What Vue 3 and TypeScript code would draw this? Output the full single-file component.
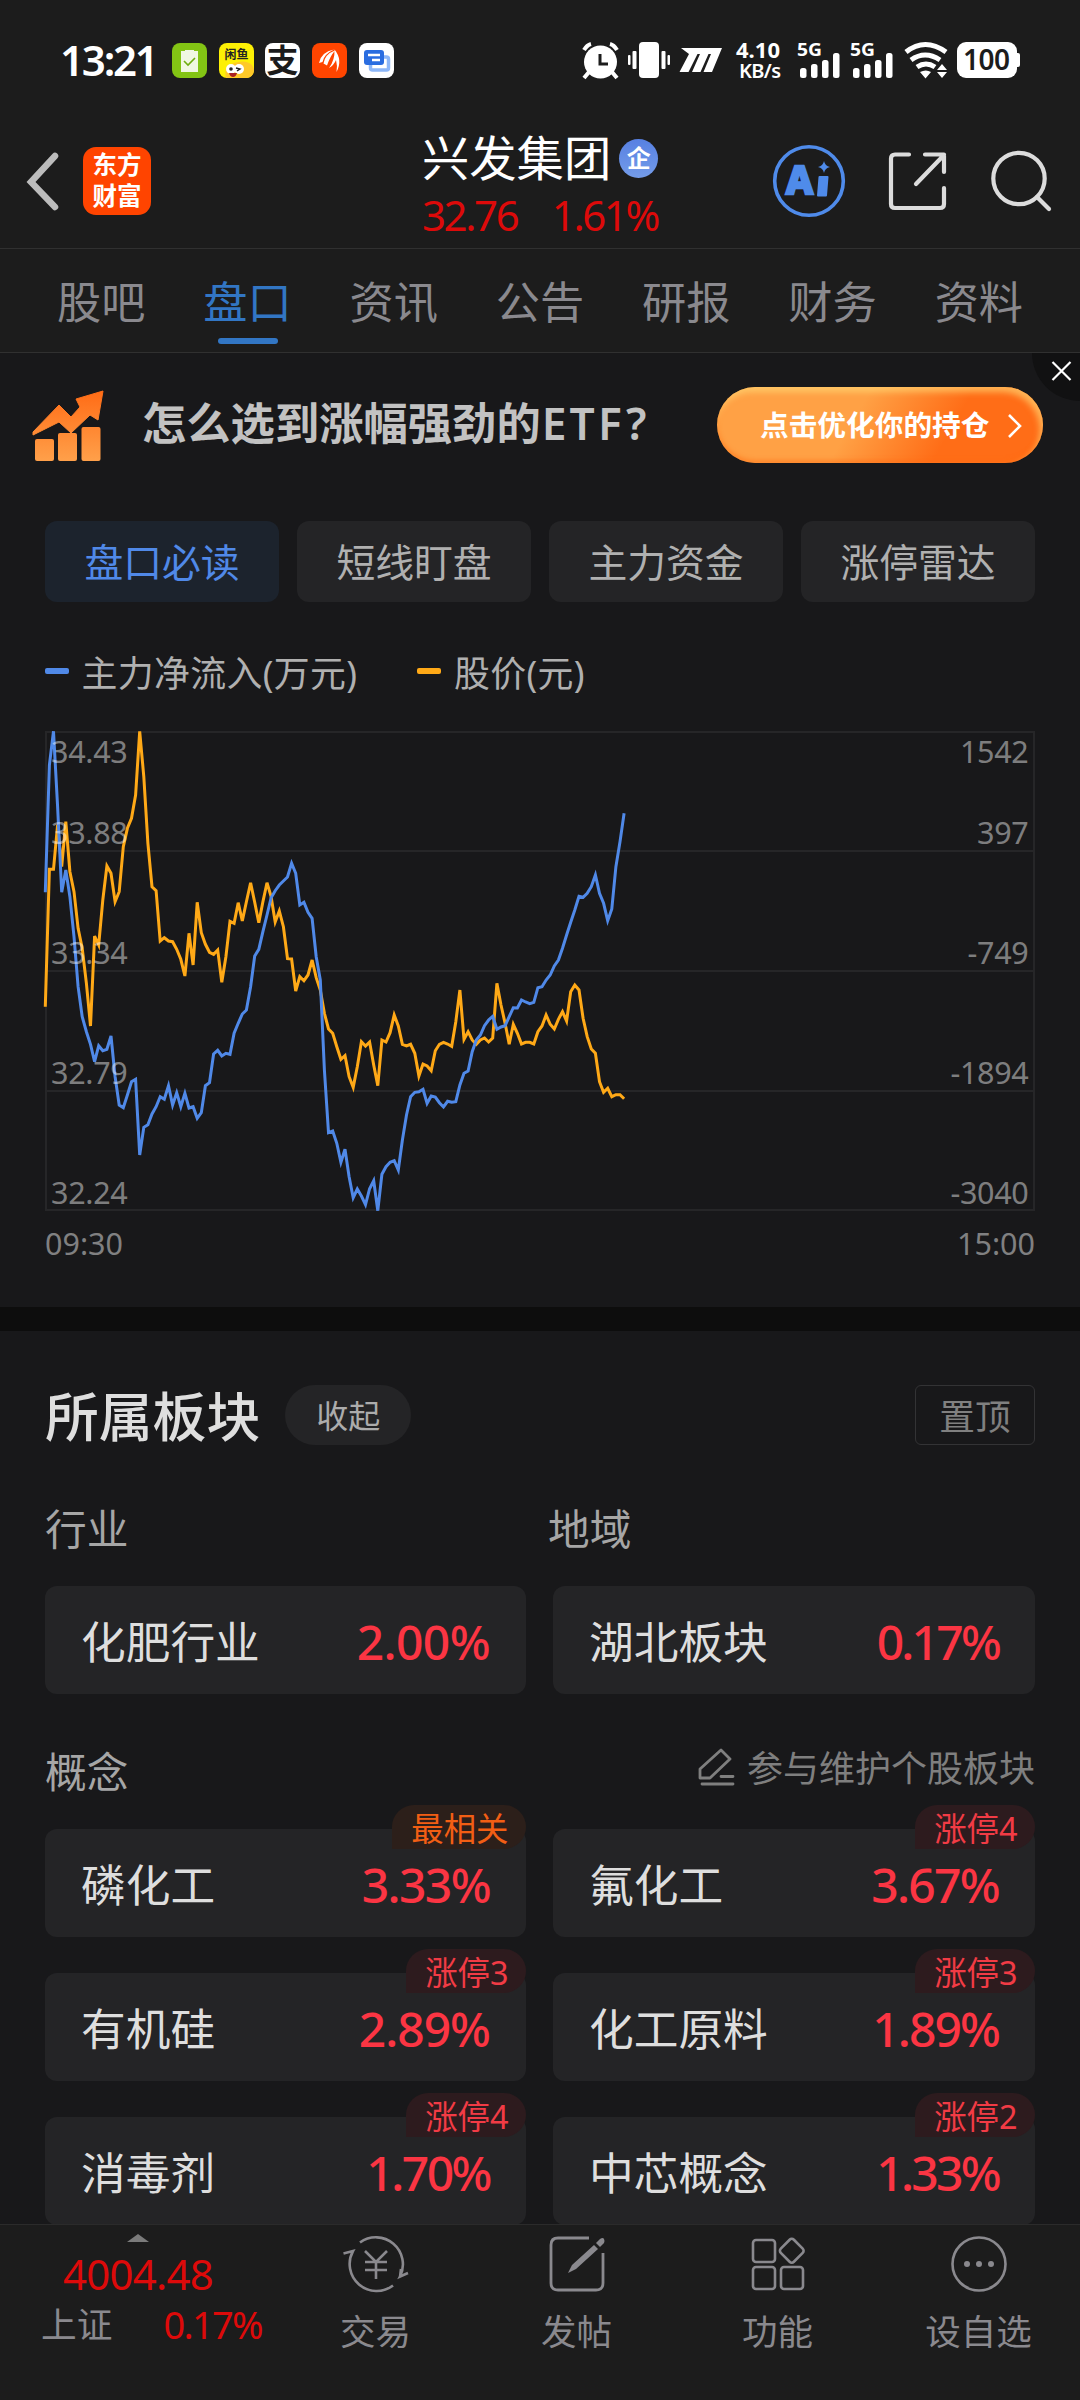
<script setup lang="ts">
interface Board { name: string; change: string; track: number; tag?: string; hot?: boolean }

const tabs: string[] = ['股吧', '盘口', '资讯', '公告', '研报', '财务', '资料']
const subTabs: string[] = ['盘口必读', '短线盯盘', '主力资金', '涨停雷达']

// track: letter spacing of the percentage, in px
const regions: Board[] = [
  { name: '化肥行业', change: '2.00%', track: -0.6 },
  { name: '湖北板块', change: '0.17%', track: -2.8 },
]
const concepts: Board[] = [
  { name: '磷化工', change: '3.33%', track: -1.6, tag: '最相关', hot: true },
  { name: '氟化工', change: '3.67%', track: -1.7, tag: '涨停4' },
  { name: '有机硅', change: '2.89%', track: -1, tag: '涨停3' },
  { name: '化工原料', change: '1.89%', track: -1.9, tag: '涨停3' },
  { name: '消毒剂', change: '1.70%', track: -2.5, tag: '涨停4' },
  { name: '中芯概念', change: '1.33%', track: -2.7, tag: '涨停2' },
]

// One sample per trading minute, in thirds of a pixel from the chart's top
const price: number[] = [
  890, 478, 478, 345, 470, 335, 485, 545, 655, 715, 820, 948, 678, 705, 570, 468, 490, 575, 545, 410,
  355, 325, 255, 64, 200, 400, 530, 542, 693, 683, 693, 695, 718, 748, 798, 670, 765, 577, 668, 703,
  727, 733, 720, 817, 740, 634, 640, 578, 633, 575, 518, 577, 638, 575, 518, 560, 636, 603, 650, 746,
  747, 843, 800, 812, 795, 750, 803, 840, 910, 957, 970, 1010, 1048, 1037, 1100, 1132, 1070, 995, 1008, 996,
  1065, 1127, 990, 996, 968, 915, 948, 1003, 1008, 1003, 1030, 1098, 1062, 1068, 1082, 1022, 1003, 997, 1002, 1009,
  935, 840, 988, 965, 990, 1003, 990, 984, 996, 984, 820, 885, 940, 1003, 943, 970, 1002, 997, 997, 1002,
  965, 948, 915, 943, 957, 928, 905, 933, 845, 825, 840, 925, 980, 1017, 1030, 1115, 1147, 1135, 1160, 1154,
  1154, 1166,
]
const inflow: number[] = [
  547, 165, 64, 290, 547, 480, 560, 680, 830, 920, 965, 1003, 1055, 1007, 1022, 1018, 978, 1100, 1185, 1193,
  1155, 1115, 1108, 1335, 1252, 1244, 1212, 1190, 1160, 1168, 1127, 1185, 1148, 1190, 1150, 1194, 1190, 1225, 1208, 1127,
  1118, 1032, 1021, 1038, 1030, 1033, 970, 940, 912, 900, 830, 738, 718, 665, 615, 563, 542, 525, 513, 501,
  460, 490, 585, 577, 607, 625, 740, 810, 1080, 1268, 1263, 1300, 1357, 1318, 1400, 1463, 1437, 1458, 1484, 1436,
  1412, 1502, 1393, 1370, 1357, 1352, 1380, 1290, 1215, 1160, 1147, 1145, 1138, 1180, 1158, 1161, 1178, 1191, 1174, 1177,
  1175, 1125, 1090, 1083, 1025, 990, 975, 947, 930, 919, 958, 951, 947, 920, 893, 894, 870, 876, 881, 877,
  833, 830, 810, 795, 768, 750, 715, 675, 637, 600, 559, 562, 550, 530, 495, 550, 580, 632, 597, 470,
  395, 310,
]
const line = (values: number[]): string =>
  values.map((v, i) => `${(0.3 + i * 4.105).toFixed(1)},${(v / 3 - 20).toFixed(1)}`).join(' ')

const axis = [
  { y: 33, left: '34.43', right: '1542' },
  { y: 114, left: '33.88', right: '397' },
  { y: 234, left: '33.34', right: '-749' },
  { y: 354, left: '32.79', right: '-1894' },
  { y: 474, left: '32.24', right: '-3040' },
]
</script>

<template>
  <div class="screen">
    <header class="top">
      <div class="status">
        <span class="clock">13:21</span>
        <div class="apps">
          <svg viewBox="0 0 35 35"><rect width="35" height="35" rx="8" fill="#83c414" /><path d="M9 8h4V7h9v1h4v21H9z" fill="#f0f7e2" /><path d="M12 18l4 4 7-7" fill="none" stroke="#6fae10" stroke-width="1.6" /></svg>
          <svg viewBox="0 0 35 35">
            <rect width="35" height="35" rx="8" fill="#fdf005" />
            <path d="M7 35q-3-12 8-15 12-4 18 2l2 4v2q-1 6-7 7z" fill="#ffc928" />
            <circle cx="12" cy="26" r="5" fill="#fff" /><circle cx="20" cy="26" r="5" fill="#fff" /><circle cx="12" cy="26" r="1.8" fill="#222" /><path d="M17 25l4 1-3 2" fill="none" stroke="#222" stroke-width="1.4" /><path d="M10 30h8q-1 4-4 4t-4-4z" fill="#a22" />
            <text x="17.5" y="15.5" text-anchor="middle" font-size="12" font-weight="700" fill="#222">闲鱼</text>
          </svg>
          <svg viewBox="0 0 35 35"><rect width="35" height="35" rx="8" fill="#fff" /><text x="17.5" y="29" text-anchor="middle" font-size="32" font-weight="700" fill="#1b1b1b">支</text></svg>
          <svg viewBox="0 0 35 35"><rect width="35" height="35" rx="8" fill="#ff4500" /><path d="M7 20q2-11 15-13.500Q12 11 10.500 19zM11.500 20.500Q13 11 23 7.500q-5 6-8 15zM17 25q6-8 5.500-18.500Q31 17 24.500 29q1-7-.5-12-2 5-7 8z" fill="#fff" /></svg>
          <svg viewBox="0 0 35 35"><rect width="35" height="35" rx="8" fill="#fff" /><rect x="11.500" y="14" width="18" height="13" rx="2" fill="none" stroke="#8db7f8" stroke-width="3.500" /><rect x="5" y="7" width="20" height="15" rx="3" fill="#2a6de0" /><path d="M9 12h12M13 17h8" stroke="#fff" stroke-width="2.500" /></svg>
        </div>
        <svg class="indicators" width="440" height="60" viewBox="581 30 440 60">
          <g fill="#fff">
            <circle cx="600.500" cy="62" r="16.500" />
            <path d="M589 72l-5 6M612 72l5 6M584 50q3-5 7-6M617 50q-3-5-7-6" stroke="#fff" stroke-width="4" />
            <path d="M600 54v10h8" stroke="#1c1c1c" stroke-width="3" fill="none" />
            <rect x="639" y="42" width="20" height="36" rx="4" />
            <rect x="632.500" y="51" width="4" height="18" rx="1" /><rect x="628" y="55" width="2.500" height="10" rx="1" />
            <rect x="661.500" y="51" width="4" height="18" rx="1" /><rect x="667.500" y="55" width="2.500" height="10" rx="1" />
            <path d="M681 48h41l-10 24h-8.500l7.500-18h-2.500l-8 18h-8.500l8-18h-2.500l-9 18h-9l9.500-18z" />
            <text x="758" y="58" text-anchor="middle" font-size="22" font-weight="700" textLength="44">4.10</text>
            <text x="760" y="78" text-anchor="middle" font-size="20" font-weight="600" textLength="42">KB/s</text>
            <g v-for="x in [797, 850]" :key="x">
              <text :x="x" y="56" font-size="18.500" font-weight="700" textLength="25" lengthAdjust="spacingAndGlyphs">5G</text>
              <rect :x="x + 3" y="68" width="6.500" height="10" rx="2.500" />
              <rect :x="x + 14" y="64" width="6.500" height="14" rx="2.500" />
              <rect :x="x + 25" y="60" width="6.500" height="18" rx="2.500" />
              <rect :x="x + 36" y="53" width="6.500" height="25" rx="2.500" />
            </g>
            <path d="M906 52q19-15 40 0M911 60q14-10 29 0M917 67q9-6 18 0" fill="none" stroke="#fff" stroke-width="5" />
            <path d="M920 72q6-3 11 0l-5.500 6.500zM937 70l5-6 5 6zM937 72l5 6 5-6z" />
            <rect x="957" y="42" width="60" height="36" rx="9" /><rect x="1014" y="53" width="6" height="14" rx="2" />
            <text x="986.500" y="70" text-anchor="middle" font-size="28" font-weight="600" fill="#1c1c1c" textLength="47">100</text>
          </g>
        </svg>
      </div>

      <div class="nav">
        <svg class="back" width="36" height="60" viewBox="0 0 36 60"><path d="M30 5L6 31l24 25" fill="none" stroke="#bcbcbc" stroke-width="6.500" stroke-linecap="round" /></svg>
        <div class="logo"><span>东方</span><span>财富</span></div>
        <div class="title">
          <div class="name"><span>兴发集团</span><i>企</i></div>
          <div class="quote"><span>32.76</span><span>1.61%</span></div>
        </div>
        <svg class="ai" width="74" height="74" viewBox="0 0 74 74">
          <circle cx="37" cy="37" r="34.300" fill="none" stroke="#4f8bea" stroke-width="3.600" />
          <text x="14" y="50" font-size="40" font-weight="800" fill="#4f8bea" stroke="#4f8bea" stroke-width="2.500" textLength="27" lengthAdjust="spacingAndGlyphs">A</text>
          <path d="M47.500 33h8l-1.500 18.500h-8z" fill="#4f8bea" stroke="#4f8bea" stroke-width="2" stroke-linejoin="round" />
          <path d="M52 17q1 5 6 6-5 1-6 6-1-5-6-6 5-1 6-6z" fill="#4f8bea" />
        </svg>
        <svg class="share" width="62" height="62" viewBox="0 0 62 62" fill="none" stroke="#dcdcdc" stroke-width="4.200" stroke-linecap="round" stroke-linejoin="round">
          <path d="M22 4.500H8q-4 0-4 4V54q0 4 4 4h45q4 0 4-4V38M38 4.500h19V22M57 5L29 34" />
        </svg>
        <svg class="search" width="62" height="64" viewBox="0 0 62 64" fill="none" stroke="#dcdcdc" stroke-width="4.200" stroke-linecap="round"><circle cx="29" cy="29.500" r="25.700" /><path d="M47 48l12 12" /></svg>
      </div>
    </header>

    <nav class="tabs">
      <div v-for="(t, i) in tabs" :key="t" class="tab" :class="{ on: i === 1 }">{{ t }}</div>
    </nav>

    <section class="banner">
      <svg width="74" height="72" viewBox="0 0 74 72">
        <defs><linearGradient id="rise" x1="0" y1="0" x2="0" y2="72" gradientUnits="userSpaceOnUse"><stop offset="0" stop-color="#ff6a14" /><stop offset="1" stop-color="#ffa04a" /></linearGradient></defs>
        <path d="M2 43L28 16l12 12 9-10-4-8L72 2l-5 29-8-5-19 18-12-11L2 46z" fill="url(#rise)" stroke="url(#rise)" stroke-linejoin="round" />
        <g fill="url(#rise)"><rect x="4" y="50" width="19" height="22" rx="2" /><rect x="27" y="44" width="19" height="28" rx="2" /><rect x="50.500" y="38" width="19" height="34" rx="2" /></g>
      </svg>
      <strong>怎么选到涨幅强劲的<b>ETF?</b></strong>
      <div class="cta">
        <span>点击优化你的持仓</span>
        <svg width="16" height="26" viewBox="0 0 16 26"><path d="M2 2l11 11L2 24" fill="none" stroke="#fff" stroke-width="2.600" /></svg>
      </div>
      <svg class="close" width="48" height="48" viewBox="0 0 48 48"><circle cx="48" cy="0" r="48" fill="#111112" /><path d="M20.500 9l18 18M38.500 9l-18 18" stroke="#fff" stroke-width="2.200" /></svg>
    </section>

    <section class="market">
      <div class="subtabs">
        <div v-for="(t, i) in subTabs" :key="t" :class="{ on: i === 0 }">{{ t }}</div>
      </div>
      <div class="legend">
        <span><b class="blue"></b>主力净流入(万元)</span>
        <span><b class="amber"></b>股价(元)</span>
      </div>
      <svg class="chart" width="990" height="484" viewBox="0 0 990 484">
        <path d="M0 2H990M0 121H990M0 241H990M0 361H990M0 480H990M1 1V481M989 1V481" stroke="#262628" stroke-width="2" />
        <polyline :points="line(price)" fill="none" stroke="#ffa917" stroke-width="3" />
        <polyline :points="line(inflow)" fill="none" stroke="#5089e8" stroke-width="3" />
        <g font-size="30.500" letter-spacing="-.3" fill="rgba(255,255,255,.46)">
          <template v-for="a in axis" :key="a.y">
            <text x="6" :y="a.y">{{ a.left }}</text>
            <text x="983.500" :y="a.y" text-anchor="end">{{ a.right }}</text>
          </template>
        </g>
      </svg>
      <div class="times"><span>09:30</span><span>15:00</span></div>
    </section>

    <section class="boards">
      <div class="head">
        <h2>所属板块</h2>
        <span class="fold">收起</span>
        <span class="pin">置顶</span>
      </div>
      <div class="pair labels"><span>行业</span><span>地域</span></div>
      <div class="pair">
        <div v-for="r in regions" :key="r.name" class="card">
          <span>{{ r.name }}</span><em :style="{ letterSpacing: r.track + 'px' }">{{ r.change }}</em>
        </div>
      </div>
      <div class="concept-head">
        <span>概念</span>
        <div class="edit">
          <svg width="38" height="38" viewBox="0 0 38 38" fill="none" stroke="#7f7f7f" stroke-width="2.800" stroke-linejoin="round" stroke-linecap="round"><path d="M23 2l9 9-20 19H2v-9zM23 28.500h12M4 36h31" /></svg>
          <span>参与维护个股板块</span>
        </div>
      </div>
      <div class="pair grid">
        <div v-for="c in concepts" :key="c.name" class="card">
          <span>{{ c.name }}</span><em :style="{ letterSpacing: c.track + 'px' }">{{ c.change }}</em>
          <i class="tag" :class="{ hot: c.hot }">{{ c.tag }}</i>
        </div>
      </div>
    </section>

    <footer class="bottom">
      <div class="index">
        <svg width="22" height="8" viewBox="0 0 22 8"><path d="M11 0l11 8H0z" fill="#7b7b7b" /></svg>
        <div class="points">4004.48</div>
        <div class="row"><span>上证</span><em>0.17%</em></div>
      </div>
      <div class="action">
        <svg width="66" height="58" viewBox="0 0 66 58" fill="none" stroke="#8a898e" stroke-width="2.600">
          <path d="M17 7.500A27 27 0 0 1 57 41.500l8-3.500M57 42l1-8M.5 18.500L10 16A27 27 0 0 0 50 50.500" />
          <path d="M22 16l11 11 11-11M33 27v17M22 27h22M22 35h22" />
        </svg>
        <span>交易</span>
      </div>
      <div class="action">
        <svg width="56" height="58" viewBox="0 0 56 58">
          <path d="M40 3H9q-7 0-7 7v38q0 7 7 7h38q7 0 7-7V18" fill="none" stroke="#8a898e" stroke-width="2.800" />
          <path d="M19 38l4-8 22-20 4 4-22 20zM47 8l4-4q3-2 4 0t0 4l-4 4z" fill="#8a898e" />
        </svg>
        <span>发帖</span>
      </div>
      <div class="action">
        <svg width="56" height="58" viewBox="0 0 56 58" fill="none" stroke="#8a898e" stroke-width="2.600">
          <rect x="3" y="5" width="22" height="22" rx="3" /><rect x="3" y="32" width="22" height="22" rx="3" /><rect x="31" y="32" width="22" height="22" rx="3" />
          <rect x="32.500" y="6.500" width="18.500" height="18.500" rx="3" transform="rotate(45 41.750 15.750)" />
        </svg>
        <span>功能</span>
      </div>
      <div class="action">
        <svg width="58" height="58" viewBox="0 0 58 58"><circle cx="29" cy="29" r="26.500" fill="none" stroke="#8a898e" stroke-width="2.600" /><g fill="#8a898e"><circle cx="17" cy="29" r="3" /><circle cx="29" cy="29" r="3" /><circle cx="41" cy="29" r="3" /></g></svg>
        <span>设自选</span>
      </div>
    </footer>
  </div>
</template>

<style>
body { margin: 0; background: #18181a; }
</style>

<style scoped>
.screen { width: 1080px; height: 2400px; overflow: hidden; display: flex; flex-direction: column; background: #18181a; font-family: "Noto Sans", "Noto Sans CJK SC", sans-serif; color: #dedede; white-space: nowrap; }
.screen * { box-sizing: border-box; }
svg { display: block; flex: none; }
em, i { font-style: normal; }
.top { height: 249px; flex: none; background: #1c1c1c; border-bottom: 1px solid #303030; }
.status { height: 120px; display: flex; align-items: center; padding-left: 60px; }
.clock { width: 112px; font-size: 42px; font-weight: 600; line-height: 60px; color: #fff; letter-spacing: -2.2px; }
.apps { display: flex; gap: 11.700px; }
.apps svg { width: 35px; height: 35px; }
.indicators { margin-left: auto; margin-right: 59px; }
.nav { height: 122px; display: flex; align-items: center; padding-left: 25px; }
.logo { width: 68px; height: 68px; margin-left: 22px; border-radius: 13px; background: #ff4400; color: #fff; display: flex; flex-direction: column; align-items: center; padding-top: 2px; font-size: 24.500px; font-weight: 700; line-height: 31px; }
.title { align-self: flex-start; margin: 8px 0 0 271px; width: 240px; }
.name { display: flex; align-items: center; height: 60px; font-size: 47.300px; color: #fff; }
.name span { position: relative; top: -3px; }
.name i { width: 39px; height: 39px; margin-left: 8px; border-radius: 50%; background: linear-gradient(#5780e2, #749ce9); font-size: 24px; font-weight: 700; line-height: 38px; text-align: center; }
.quote { display: flex; justify-content: space-between; height: 56px; line-height: 53px; font-size: 42px; color: #dd0a0a; letter-spacing: -2.4px; padding-right: 4px; }
.ai { margin-left: 109.500px; }
.share { margin-left: 41px; }
.search { margin-left: 41px; }
.tabs { height: 104px; flex: none; display: flex; padding: 0 28px; background: #1c1c1c; border-bottom: 1px solid #303030; }
.tab { flex: 1; position: relative; text-align: center; font-size: 44.200px; line-height: 106px; color: #8a898e; }
.tab.on { color: #3276c4; }
.tab.on::after { content: ""; position: absolute; left: 50%; bottom: 8px; width: 60px; height: 6px; margin-left: -29px; border-radius: 3px; background: #3276c4; }
.banner { position: relative; height: 143px; flex: none; display: flex; align-items: center; padding: 0 37px 0 31px; }
.banner strong { margin: -7px 0 0 37px; font-size: 44.300px; font-weight: 600; color: #c2c2c2; }
.banner b { font-weight: 600; letter-spacing: 3.200px; margin-left: 1px; }
.cta { margin-left: auto; width: 326px; height: 76px; border-radius: 38px; display: flex; align-items: center; padding-left: 43px; color: #fff; font-size: 28.700px; font-weight: 700; background: linear-gradient(120deg, #ffa145 42%, #ff6d17 70%); box-shadow: inset -3px 5px 6px rgba(255, 220, 120, .65), inset 0 -3px 4px rgba(255, 110, 20, .5); }
.cta span { margin-top: -3px; }
.cta svg { margin: 2px 0 0 17px; }
.close { position: absolute; right: 0; top: 0; }
.market { height: 811px; flex: none; padding: 25px 45px 0; }
.subtabs { display: flex; gap: 18px; }
.subtabs div { flex: 1; height: 81px; border-radius: 12px; background: #242426; text-align: center; line-height: 82px; font-size: 38.800px; color: #b0b0b0; }
.subtabs .on { background: #1c232d; color: #5089e8; }
.legend { display: flex; gap: 60px; margin-top: 47px; height: 48px; line-height: 47px; font-size: 35.900px; letter-spacing: .35px; color: #b0b0b0; }
.legend span { display: flex; align-items: center; }
.legend b { width: 24px; height: 6px; margin: -4px 12.500px 0 0; border-radius: 2px; }
.blue { background: #5089e8; }
.amber { background: #ffa917; }
.chart { margin-top: 33px; overflow: visible; }
.times { display: flex; justify-content: space-between; height: 44px; margin-top: 7px; line-height: 44px; font-size: 30.500px; color: #808081; }
.boards { flex: 1; min-height: 0; overflow: hidden; border-top: 24px solid #0d0d0d; padding: 54px 45px 0; }
.head { display: flex; align-items: center; height: 60px; }
h2 { margin: 0; font-size: 53.800px; font-weight: 500; line-height: 60px; color: #dedede; position: relative; top: 1px; }
.fold { margin-left: 25px; width: 126px; height: 60px; border-radius: 30px; background: #242426; text-align: center; line-height: 62px; font-size: 32px; color: #acacac; }
.pin { margin-left: auto; width: 120px; height: 60px; border: 1px solid #333335; border-radius: 6px; text-align: center; line-height: 61px; font-size: 35.700px; color: #808080; }
.pair { display: grid; grid-template-columns: 481px 482px; column-gap: 27px; }
.labels { margin: 58px 0 32px; height: 51px; line-height: 51px; font-size: 41.700px; color: #a6a6a6; column-gap: 22px; }
.card { position: relative; display: flex; align-items: center; justify-content: space-between; height: 108px; padding: 0 36px 0 36px; border-radius: 12px; background: #242426; font-size: 44.700px; line-height: 64px; }
.card span, .card em { position: relative; top: 1.500px; }
.card em { color: #fb3543; font-size: 48px; font-weight: 500; }
.concept-head { display: flex; justify-content: space-between; align-items: center; height: 60px; margin: 46px 0 29px; font-size: 41.700px; color: #a6a6a6; }
.edit { display: flex; align-items: center; gap: 11px; font-size: 36px; color: #7f7f7f; margin-top: -8px; }
.edit svg { margin-top: 2px; }
.grid { row-gap: 36px; }
.tag { position: absolute; right: 0; top: -24px; height: 44px; padding: 0 17.500px 0 19.500px; border-radius: 24px 24px 24px 0; background: #2d1b1e; color: #f23b45; font-size: 32.400px; line-height: 47px; }
.tag.hot { background: #2c1f1a; color: #f25e14; }
.bottom { height: 176px; flex: none; display: flex; background: #1c1c1c; border-top: 1px solid #2b2b2b; }
.index { width: 275px; display: flex; flex-direction: column; align-items: center; padding-top: 9px; color: #dd0a0a; }
.index svg, .points { margin-left: 1px; }
.points { margin-top: 7px; height: 50px; line-height: 50px; font-size: 42px; letter-spacing: -.8px; }
.row { align-self: stretch; display: flex; justify-content: space-between; padding: 0 13px 0 41px; height: 50px; line-height: 50px; font-size: 35.700px; }
.row span { color: #8a898e; }
.row em { font-size: 38px; letter-spacing: -1.700px; }
.action { width: 201px; display: flex; flex-direction: column; align-items: center; padding-top: 10px; color: #8a898e; font-size: 35.500px; line-height: 50px; }
.action span { margin-top: 13px; }
</style>
